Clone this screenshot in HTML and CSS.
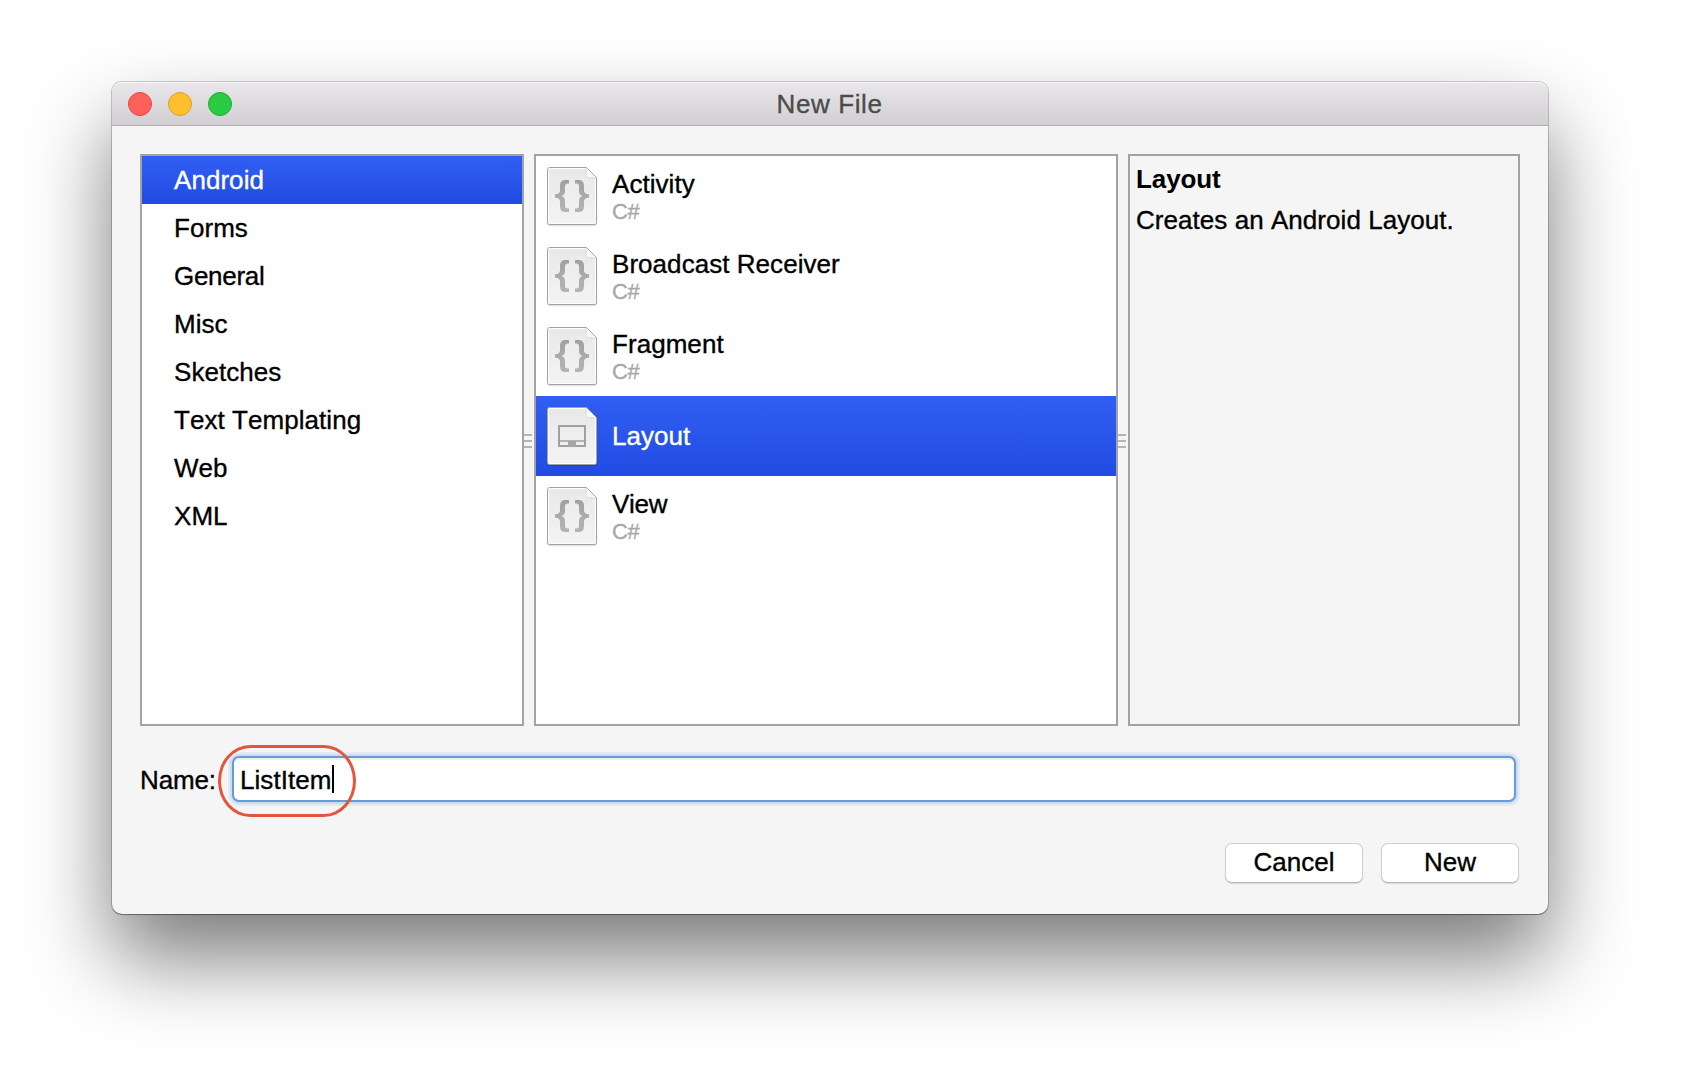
FILE: index.html
```html
<!DOCTYPE html>
<html lang="en">
<head>
<meta charset="utf-8">
<title>New File</title>
<link rel="stylesheet" href="styles.css">
</head>
<body>
<svg width="0" height="0" class="defs">
  <defs>
    <linearGradient id="paper" x1="0" y1="0" x2="0" y2="1"><stop offset="0" stop-color="#e9e9e9"/><stop offset="1" stop-color="#f3f3f3"/></linearGradient>
    <linearGradient id="ink" x1="0" y1="0" x2="0" y2="1"><stop offset="0" stop-color="#a0a0a0"/><stop offset="1" stop-color="#b5b5b5"/></linearGradient>
    <symbol id="page" viewBox="0 0 54 64">
      <path d="M5 4H41.500L51.500 14V58.500a2 2 0 0 1-2 2H5a2 2 0 0 1-2-2V6a2 2 0 0 1 2-2z" fill="none" stroke="#000" stroke-opacity=".12" stroke-width="1.500"/>
      <path d="M4.500 2.500H41.500L51.500 12.500V57.500a2 2 0 0 1-2 2H4.500a2 2 0 0 1-2-2V4.500a2 2 0 0 1 2-2z" fill="#fff" stroke="#a2a2a2"/>
      <path d="M4 4H40.500V10.500a3 3 0 0 0 3 3H50V58H4z" fill="url(#paper)"/>
      <path d="M41 3V10.500a2.500 2.500 0 0 0 2.500 2.500H51" fill="#fafafa" stroke="#cfcfcf"/>
    </symbol>
    <symbol id="code" viewBox="0 0 54 64">
      <use href="#page"/>
      <path id="brace" d="M24 15H20.500Q15 15 15 20.500V25.500Q15 29 10 29.200V32.800Q15 33 15 36.500V41.500Q15 47 20.500 47H24V43.500H22.500Q20 43.500 20 40.500V36Q20 32 16.500 31Q20 30 20 26V21.500Q20 18.500 22.500 18.500H24z" fill="url(#ink)"/>
      <use href="#brace" transform="matrix(-1 0 0 1 54 0)"/>
    </symbol>
    <symbol id="layout" viewBox="0 0 54 64">
      <use href="#page"/>
      <path d="M14 21H40V41H14z" fill="none" stroke="#a0a0a0" stroke-width="2"/>
      <path d="M14 36H40" stroke="#a0a0a0" stroke-width="1.500"/>
      <path d="M23 36H31V42H23z" fill="#a6a6a6"/>
    </symbol>
  </defs>
</svg>

<div class="window">
  <header class="titlebar">
    <div class="lights"><i class="light close"></i><i class="light minimize"></i><i class="light zoom"></i></div>
    <h1 class="title">New File</h1>
  </header>

  <main class="content">
    <div class="panes">
      <ul class="pane categories">
        <li class="category selected">Android</li>
        <li class="category">Forms</li>
        <li class="category tight">General</li>
        <li class="category">Misc</li>
        <li class="category">Sketches</li>
        <li class="category">Text Templating</li>
        <li class="category">Web</li>
        <li class="category">XML</li>
      </ul>
      <div class="splitter"><i></i><i></i><i></i></div>
      <ul class="pane templates">
        <li class="template"><svg class="icon"><use href="#code"/></svg><div class="label"><span class="name">Activity</span><span class="lang">C#</span></div></li>
        <li class="template"><svg class="icon"><use href="#code"/></svg><div class="label"><span class="name">Broadcast Receiver</span><span class="lang">C#</span></div></li>
        <li class="template"><svg class="icon"><use href="#code"/></svg><div class="label"><span class="name">Fragment</span><span class="lang">C#</span></div></li>
        <li class="template single selected"><svg class="icon"><use href="#layout"/></svg><div class="label"><span class="name">Layout</span></div></li>
        <li class="template"><svg class="icon"><use href="#code"/></svg><div class="label"><span class="name tight">View</span><span class="lang">C#</span></div></li>
      </ul>
      <div class="splitter"><i></i><i></i><i></i></div>
      <section class="pane details">
        <h2 class="details-title">Layout</h2>
        <p class="details-text">Creates an Android Layout.</p>
      </section>
    </div>

    <div class="name-row">
      <span class="name-label">Name:</span>
      <div class="field"><span class="value">ListItem</span><i class="caret"></i></div>
      <div class="marker"></div>
    </div>

    <div class="buttons">
      <button class="button">Cancel</button>
      <button class="button">New</button>
    </div>
  </main>
</div>
</body>
</html>
```
FILE: styles.css
```css
* { box-sizing: border-box; margin: 0; padding: 0; }
html { height: 100%; overflow: hidden; background: #fff; }
body {
  height: 100%;
  padding: 82px 144px 0 112px;
  overflow: hidden;
  font-family: "Liberation Sans", Arial, sans-serif;
  font-size: 26px;
  font-kerning: none;
  letter-spacing: .05px;
  -webkit-text-stroke: .35px currentColor;
  color: #000;
}
ul { list-style: none; }
.defs { position: absolute; }

.window {
  width: 1436px;
  height: 832px;
  border-radius: 10px;
  background: #f5f5f5;
  box-shadow: 0 0 0 1px rgba(0, 0, 0, .18), 0 1px 1px rgba(0, 0, 0, .3), 0 44px 84px rgba(0, 0, 0, .52);
}

.titlebar {
  display: grid;
  grid-template-columns: 1fr auto 1fr;
  align-items: start;
  height: 44px;
  padding: 0 17px 0 16px;
  border-radius: 10px 10px 0 0;
  border-bottom: 1px solid #b1afb1;
  background: linear-gradient(#e9e7e9, #d1cfd1);
  box-shadow: inset 0 1px 0 #f7f7f7;
}
.lights { display: flex; gap: 16px; padding-top: 10px; }
.light { width: 24px; height: 24px; border-radius: 50%; border: 1px solid; }
.close { background: #ff6059; border-color: #e2453f; }
.minimize { background: #ffc02f; border-color: #dfa023; }
.zoom { background: #29cc42; border-color: #1bac2c; }
.title { font-size: 26px; font-weight: 400; letter-spacing: .6px; line-height: 45px; color: #4c4b4c; }

.content { padding: 28px 28px 0; }
.panes { display: flex; height: 572px; }
.pane { border: 2px solid #a3a3a3; background: #fff; }
.categories { width: 384px; }
.templates { width: 584px; }
.details { width: 392px; padding: 5px 6px; background: #f5f5f5; }

.splitter {
  display: flex;
  flex-direction: column;
  justify-content: center;
  gap: 4px;
  width: 10px;
  padding-top: 2px;
}
.splitter i { width: 8px; height: 2px; background: #b4b4b4; }

.category { height: 48px; padding-left: 32px; line-height: 48px; }
.selected { background: linear-gradient(#315ff2, #214be3); color: #fff; }
.tight { letter-spacing: -.3px; }

.template { display: flex; gap: 13px; height: 80px; padding: 9px 0 0 9px; }
.icon { flex: none; width: 54px; height: 64px; }
.label { display: flex; flex-direction: column; padding-top: 4px; }
.name { line-height: 30px; }
.lang { line-height: 26px; font-size: 22px; letter-spacing: -.4px; color: #a8a8a8; }
.single .label { padding-top: 16px; }

.details-title { font-size: 26px; line-height: 36px; font-weight: 700; letter-spacing: -.1px; -webkit-text-stroke: 0; }
.details-text { padding-top: 5px; line-height: 36px; }

.name-row { position: relative; display: flex; justify-content: space-between; height: 46px; margin-top: 30px; padding-right: 4px; line-height: 48px; }
.name-label { letter-spacing: -.15px; }
.field {
  display: flex;
  align-items: center;
  width: 1284px;
  padding-left: 6px;
  border: 2px solid #649cd8;
  border-radius: 7px;
  background: #fff;
  box-shadow: 0 0 0 2px #cddcef, 0 0 0 4px #e5ebf3, inset 0 2px 0 #efefef;
}
.value { padding-top: 2px; line-height: 42px; }
.caret { width: 2px; height: 28px; background: #000; margin-left: 1px; }
.marker {
  position: absolute;
  left: 78px;
  top: -11px;
  width: 138px;
  height: 72px;
  border: 3px solid #e2563b;
  border-radius: 32px / 36px;
}

.buttons { display: flex; justify-content: flex-end; gap: 18px; margin-top: 41px; padding-right: 1px; }
.button {
  width: 138px;
  height: 40px;
  padding-bottom: 2px;
  border: 1px solid #cfcfcf;
  border-bottom-color: #b6b6b6;
  border-radius: 7px;
  background: #fff;
  box-shadow: 0 1px 1px rgba(0, 0, 0, .12);
  font: inherit;
  font-kerning: none;
  -webkit-text-stroke: .35px currentColor;
  color: #000;
}
```
